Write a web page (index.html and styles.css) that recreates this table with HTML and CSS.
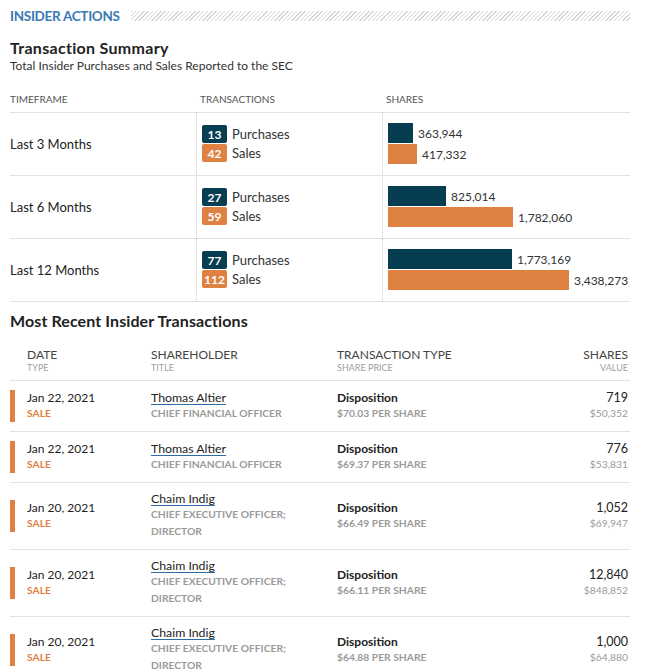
FILE: index.html
```html
<!DOCTYPE html>
<html lang="en">
<head>
<meta charset="utf-8">
<title>Insider Actions</title>
<link rel="stylesheet" href="styles.css">
</head>
<body>
<div class="page">
  <div class="section-head">
    <span class="section-title">INSIDER ACTIONS</span>
    <span class="hatch"></span>
  </div>

  <h2 class="h2">Transaction Summary</h2>
  <p class="sub">Total Insider Purchases and Sales Reported to the SEC</p>

  <div class="summary">
    <div class="sh">Timeframe</div>
    <div class="sh sh-pad">Transactions</div>
    <div class="sh sh-pad">Shares</div>

    <div class="sc tf">Last 3 Months</div>
    <div class="sc tx">
      <div class="txl"><span class="badge buy">13</span>Purchases</div>
      <div class="txl"><span class="badge sell">42</span>Sales</div>
    </div>
    <div class="sc sv">
      <div class="bl"><span class="bar buy" style="width:25px"></span><span>363,944</span></div>
      <div class="bl"><span class="bar sell" style="width:29px"></span><span>417,332</span></div>
    </div>

    <div class="sc tf">Last 6 Months</div>
    <div class="sc tx">
      <div class="txl"><span class="badge buy">27</span>Purchases</div>
      <div class="txl"><span class="badge sell">59</span>Sales</div>
    </div>
    <div class="sc sv">
      <div class="bl"><span class="bar buy" style="width:58px"></span><span>825,014</span></div>
      <div class="bl"><span class="bar sell" style="width:125px"></span><span>1,782,060</span></div>
    </div>

    <div class="sc tf">Last 12 Months</div>
    <div class="sc tx">
      <div class="txl"><span class="badge buy">77</span>Purchases</div>
      <div class="txl"><span class="badge sell">112</span>Sales</div>
    </div>
    <div class="sc sv">
      <div class="bl"><span class="bar buy" style="width:124px"></span><span>1,773,169</span></div>
      <div class="bl"><span class="bar sell" style="width:181px"></span><span>3,438,273</span></div>
    </div>
  </div>

  <h2 class="h2 h2-recent">Most Recent Insider Transactions</h2>

  <div class="recent">
    <div class="rh">
      <div></div>
      <div class="cd"><div class="hd1">Date</div><div class="hd2">Type</div></div>
      <div><div class="hd1">Shareholder</div><div class="hd2">Title</div></div>
      <div><div class="hd1">Transaction Type</div><div class="hd2">Share Price</div></div>
      <div class="cr"><div class="hd1">Shares</div><div class="hd2">Value</div></div>
    </div>

    <div class="rr">
      <div class="flag"></div>
      <div class="cd"><div class="l1">Jan 22, 2021</div><div class="l2 sale">Sale</div></div>
      <div class="cs"><div class="l1"><span class="name">Thomas Altier</span></div><div class="l2">Chief Financial Officer</div></div>
      <div><div class="l1 b">Disposition</div><div class="l2">$70.03 per share</div></div>
      <div class="cr"><div class="l1 num">719</div><div class="l2 val">$50,352</div></div>
    </div>

    <div class="rr">
      <div class="flag"></div>
      <div class="cd"><div class="l1">Jan 22, 2021</div><div class="l2 sale">Sale</div></div>
      <div class="cs"><div class="l1"><span class="name">Thomas Altier</span></div><div class="l2">Chief Financial Officer</div></div>
      <div><div class="l1 b">Disposition</div><div class="l2">$69.37 per share</div></div>
      <div class="cr"><div class="l1 num">776</div><div class="l2 val">$53,831</div></div>
    </div>

    <div class="rr">
      <div class="flag"></div>
      <div class="cd"><div class="l1">Jan 20, 2021</div><div class="l2 sale">Sale</div></div>
      <div class="cs"><div class="l1"><span class="name">Chaim Indig</span></div><div class="l2">Chief Executive Officer; Director</div></div>
      <div><div class="l1 b">Disposition</div><div class="l2">$66.49 per share</div></div>
      <div class="cr"><div class="l1 num">1,052</div><div class="l2 val">$69,947</div></div>
    </div>

    <div class="rr">
      <div class="flag"></div>
      <div class="cd"><div class="l1">Jan 20, 2021</div><div class="l2 sale">Sale</div></div>
      <div class="cs"><div class="l1"><span class="name">Chaim Indig</span></div><div class="l2">Chief Executive Officer; Director</div></div>
      <div><div class="l1 b">Disposition</div><div class="l2">$66.11 per share</div></div>
      <div class="cr"><div class="l1 num">12,840</div><div class="l2 val">$848,852</div></div>
    </div>

    <div class="rr">
      <div class="flag"></div>
      <div class="cd"><div class="l1">Jan 20, 2021</div><div class="l2 sale">Sale</div></div>
      <div class="cs"><div class="l1"><span class="name">Chaim Indig</span></div><div class="l2">Chief Executive Officer; Director</div></div>
      <div><div class="l1 b">Disposition</div><div class="l2">$64.88 per share</div></div>
      <div class="cr"><div class="l1 num">1,000</div><div class="l2 val">$64,880</div></div>
    </div>
  </div>
</div>
</body>
</html>
```

FILE: styles.css
```css
body {
  margin: 0;
  background: #fff;
  color: #333;
  font-family: Lato, "Open Sans", sans-serif;
}

.page {
  width: 620px;
  margin-left: 10px;
  padding-top: 7px;
}

.section-head {
  display: flex;
  align-items: center;
  gap: 11px;
  height: 18px;
}

.section-title {
  font-size: 13.5px;
  line-height: 18px;
  font-weight: 700;
  letter-spacing: -0.3px;
  color: #3b79b4;
}

.hatch {
  flex: 1;
  height: 10px;
  background: repeating-linear-gradient(135deg, #d6d6d6 0 1px, #fff 1px 3px);
}

.h2 {
  margin: 13px 0 0;
  font-size: 16px;
  line-height: 20px;
  font-weight: 700;
  letter-spacing: 0.3px;
  color: #222;
}

.sub {
  margin: 1px 0 0;
  font-size: 12px;
  line-height: 14px;
  color: #333;
}

.summary {
  margin-top: 20px;
  display: grid;
  grid-template-columns: 186px 186px 1fr;
}

.sh {
  font-size: 10px;
  line-height: 12px;
  text-transform: uppercase;
  color: #555;
  padding-bottom: 7px;
  border-bottom: 1px solid #e2e2e2;
}

.sh-pad {
  padding-left: 4px;
}

.sc {
  display: flex;
  min-height: 41px;
  padding: 10px 0 11px;
  border-bottom: 1px solid #e2e2e2;
}

.tf {
  align-items: center;
  font-size: 13px;
  color: #222;
}

.tx,
.sv {
  flex-direction: column;
  justify-content: center;
  gap: 1px;
  padding-left: 5px;
  border-left: 1px dotted #c8c8c8;
}

.txl {
  display: flex;
  align-items: center;
  gap: 5px;
  height: 18px;
  font-size: 13px;
  color: #333;
}

.badge {
  display: flex;
  align-items: center;
  justify-content: center;
  width: 25px;
  height: 18px;
  border-radius: 2px;
  color: #fff;
  font-size: 12px;
  font-weight: 700;
}

.buy {
  background: #073d51;
}

.sell {
  background: #de8142;
}

.bl {
  display: flex;
  align-items: center;
  gap: 5px;
  height: 20px;
  font-size: 12px;
  color: #333;
}

.bar {
  height: 20px;
}

.h2-recent {
  margin-top: 9px;
  letter-spacing: 0.1px;
}

.rh,
.rr {
  display: grid;
  grid-template-columns: 5px 136px 186px 1fr auto;
  align-items: center;
  border-bottom: 1px solid #e2e2e2;
}

.rh {
  padding: 17px 0 7px;
  align-items: end;
}

.rr {
  padding: 9px 0;
}

.hd1 {
  font-size: 12px;
  line-height: 14px;
  text-transform: uppercase;
  color: #444;
}

.hd2 {
  font-size: 9px;
  line-height: 11px;
  text-transform: uppercase;
  color: #a0a0a0;
}

.cd {
  padding-left: 12px;
}

.cs {
  padding-right: 10px;
}

.cr {
  text-align: right;
  padding-right: 2px;
}

.flag {
  width: 5px;
  height: 32px;
  background: #de8142;
}

.l1 {
  font-size: 12px;
  line-height: 14px;
  color: #222;
}

.l1.b {
  font-weight: 700;
}

.l1.num {
  font-size: 12.5px;
}

.name {
  font-size: 12.3px;
  text-decoration: underline;
  text-decoration-color: #2f6ba8;
  text-decoration-skip-ink: none;
  text-underline-offset: 2px;
}

.l2 {
  font-size: 10.3px;
  line-height: 17px;
  font-weight: 700;
  text-transform: uppercase;
  color: #9a9a9a;
}

.l2.sale {
  color: #de8142;
}

.l2.val {
  font-weight: 400;
}
```
